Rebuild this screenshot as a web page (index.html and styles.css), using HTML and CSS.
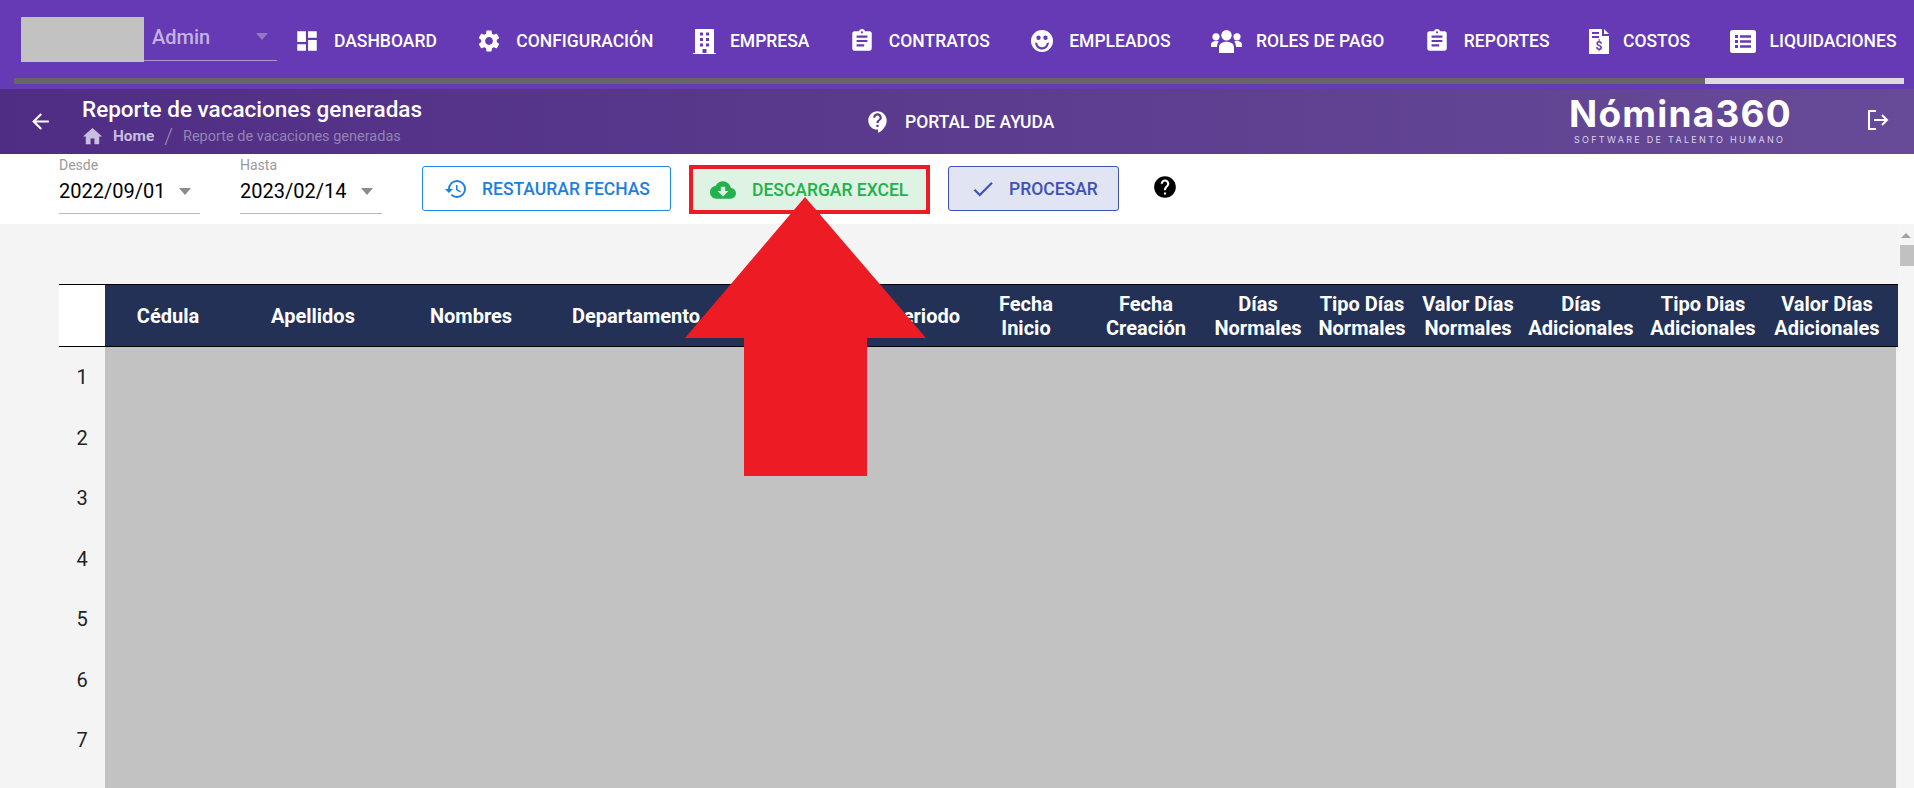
FILE: index.html
```html
<!DOCTYPE html>
<html lang="es">
<head>
<meta charset="utf-8">
<title>Reporte de vacaciones generadas</title>
<link rel="stylesheet" href="styles.css">
</head>
<body>
<header class="topbar">
  <div class="toprow">
    <div class="avatar"></div>
    <div class="profile"><span class="profile-name">Admin</span><span class="caret caret-profile"></span></div>
    <nav class="nav">
      <a class="nav-item"><span class="nav-icon"><svg class="i26" viewBox="0 0 24 24"><path d="M3 13h8V3H3v10zm0 8h8v-6H3v6zm10 0h8V11h-8v10zm0-18v6h8V3h-8z"/></svg></span>DASHBOARD</a>
      <a class="nav-item"><span class="nav-icon"><svg class="i26" viewBox="0 0 24 24"><path d="M19.14 12.94c.04-.3.06-.61.06-.94 0-.32-.02-.64-.07-.94l2.03-1.58a.49.49 0 0 0 .12-.61l-1.92-3.32a.488.488 0 0 0-.59-.22l-2.39.96c-.5-.38-1.03-.7-1.62-.94l-.36-2.54a.484.484 0 0 0-.48-.41h-3.84c-.24 0-.43.17-.47.41l-.36 2.54c-.59.24-1.13.57-1.62.94l-2.39-.96c-.22-.08-.47 0-.59.22L2.74 8.87c-.12.21-.08.47.12.61l2.03 1.58c-.05.3-.09.63-.09.94s.02.64.07.94l-2.03 1.58a.49.49 0 0 0-.12.61l1.92 3.32c.12.22.37.29.59.22l2.39-.96c.5.38 1.03.7 1.62.94l.36 2.54c.05.24.24.41.48.41h3.84c.24 0 .44-.17.47-.41l.36-2.54c.59-.24 1.13-.56 1.62-.94l2.39.96c.22.08.47 0 .59-.22l1.92-3.32c.12-.22.07-.47-.12-.61l-2.01-1.58zM12 15.6c-1.98 0-3.6-1.62-3.6-3.6s1.62-3.6 3.6-3.6 3.6 1.62 3.6 3.6-1.62 3.6-3.6 3.6z"/></svg></span>CONFIGURACIÓN</a>
      <a class="nav-item"><span class="nav-icon nav-icon-s"><svg class="icon-building" viewBox="0 0 23 25"><path fill-rule="evenodd" d="M2 0h19v24h2v1H0v-1h2zM7 3.500v3h3v-3zM13 3.500v3h3v-3zM7 9v3h3V9zM13 9v3h3V9zM7 14.500v3h3v-3zM13 14.500v3h3v-3zM9.500 20v4h4v-4z"/></svg></span>EMPRESA</a>
      <a class="nav-item"><span class="nav-icon"><svg class="i26" viewBox="0 0 24 24"><path d="M19 3h-4.180C14.400 1.840 13.300 1 12 1c-1.300 0-2.400.84-2.820 2H5c-1.100 0-2 .9-2 2v14c0 1.100.9 2 2 2h14c1.100 0 2-.9 2-2V5c0-1.100-.9-2-2-2zm-7 0c.55 0 1 .45 1 1s-.45 1-1 1-1-.45-1-1 .45-1 1-1zm2 14H7v-2h7v2zm3-4H7v-2h10v2zm0-4H7V7h10v2z"/></svg></span>CONTRATOS</a>
      <a class="nav-item"><span class="nav-icon"><svg class="icon-face" viewBox="0 0 22 22"><path fill-rule="evenodd" d="M11 0a11 11 0 1 1 0 22a11 11 0 0 1 0-22zM7.500 5.500a2.200 2.200 0 1 0 0 4.400a2.200 2.200 0 0 0 0-4.400zM14.500 5.500a2.200 2.200 0 1 0 0 4.400a2.200 2.200 0 0 0 0-4.400zM4 12.500C4.500 17 7.500 19.500 11 19.500S17.500 17 18 12.500L15.800 13C15.300 16 13.300 17.300 11 17.300S6.700 16 6.200 13z"/></svg></span>EMPLEADOS</a>
      <a class="nav-item"><span class="nav-icon nav-icon-l"><svg class="icon-users" viewBox="0 0 31 23"><circle cx="15.500" cy="5.200" r="5.200"/><circle cx="5" cy="6.800" r="3.600"/><circle cx="26" cy="6.800" r="3.600"/><path d="M8 23v-5.500c0-3.500 3-5.700 7.500-5.700s7.500 2.200 7.500 5.700V23zM0 17v-2.500c0-2.300 2-3.500 5-3.500 1 0 1.800.1 2.700.4C6.500 13 6 15 6 17zM31 17v-2.500c0-2.300-2-3.500-5-3.500-1 0-1.800.1-2.700.4C24.500 13 25 15 25 17z"/></svg></span>ROLES DE PAGO</a>
      <a class="nav-item"><span class="nav-icon"><svg class="i26" viewBox="0 0 24 24"><path d="M19 3h-4.180C14.400 1.840 13.300 1 12 1c-1.300 0-2.400.84-2.820 2H5c-1.100 0-2 .9-2 2v14c0 1.100.9 2 2 2h14c1.100 0 2-.9 2-2V5c0-1.100-.9-2-2-2zm-7 0c.55 0 1 .45 1 1s-.45 1-1 1-1-.45-1-1 .45-1 1-1zm2 14H7v-2h7v2zm3-4H7v-2h10v2zm0-4H7V7h10v2z"/></svg></span>REPORTES</a>
      <a class="nav-item"><span class="nav-icon nav-icon-xs"><svg class="icon-doc" viewBox="0 0 20 25"><path fill-rule="evenodd" d="M0 0h13v7h7v18H0zM15 0l5 5h-5zM3 3v2h7V3zM3 7v2h7V7z"/><text class="doc-sign" x="10" y="20.500" text-anchor="middle">$</text></svg></span>COSTOS</a>
      <a class="nav-item"><span class="nav-icon"><svg class="icon-list" viewBox="0 0 26 23"><path fill-rule="evenodd" d="M2.500 0h21A2.500 2.500 0 0 1 26 2.500v18a2.500 2.500 0 0 1-2.500 2.500h-21A2.500 2.500 0 0 1 0 20.500v-18A2.500 2.500 0 0 1 2.500 0zM5 5v3h3V5zM10 5.200v2.600h11V5.200zM5 10v3h3v-3zM10 10.200v2.600h11v-2.600zM5 15v3h3v-3zM10 15.200v2.600h11v-2.600z"/></svg></span>LIQUIDACIONES</a>
    </nav>
  </div>
  <div class="hscroll"><div class="hscroll-thumb"></div></div>
</header>

<section class="subbar">
  <span class="back"><svg class="i25" viewBox="0 0 24 24"><path d="M20 11H7.830l5.590-5.590L12 4l-8 8 8 8 1.410-1.410L7.830 13H20v-2z"/></svg></span>
  <div class="crumbs">
    <h1 class="page-title">Reporte de vacaciones generadas</h1>
    <div class="breadcrumb">
      <svg class="icon-home" viewBox="0 0 24 24"><path d="M10 20v-6h4v6h5v-8h3L12 3 2 12h3v8z"/></svg>
      <span class="crumb-home">Home</span>
      <span class="crumb-sep">/</span>
      <span class="crumb-current">Reporte de vacaciones generadas</span>
    </div>
  </div>
  <a class="portal"><svg class="i26" viewBox="0 0 24 24"><path d="M11.500 2C6.810 2 3 5.810 3 10.500S6.810 19 11.500 19h.5v3c4.860-2.340 8-7 8-11.500C20 5.810 16.190 2 11.500 2zm1 14.500h-2v-2h2v2zm0-3.500h-2c0-3.250 3-3 3-5 0-1.100-.9-2-2-2s-2 .9-2 2h-2c0-2.210 1.790-4 4-4s4 1.790 4 4c0 2.500-3 2.750-3 5z"/></svg><span class="portal-label">PORTAL DE AYUDA</span></a>
  <div class="brand">
    <div class="brand-name">Nómina360</div>
    <div class="brand-sub">SOFTWARE DE TALENTO HUMANO</div>
  </div>
  <svg class="icon-logout" viewBox="0 0 22 20"><path d="M9 1H2v18h7M7 10h13M15 5l5 5-5 5"/></svg>
</section>

<section class="toolbar">
  <div class="field">
    <span class="field-label">Desde</span>
    <div class="field-value"><span>2022/09/01</span><span class="caret"></span></div>
  </div>
  <div class="field field-second">
    <span class="field-label">Hasta</span>
    <div class="field-value"><span>2023/02/14</span><span class="caret"></span></div>
  </div>
  <button class="btn btn-restore"><svg class="i24" viewBox="0 0 24 24"><path d="M13 3a9 9 0 0 0-9 9H1l3.890 3.890.07.14L9 12H6c0-3.870 3.130-7 7-7s7 3.130 7 7-3.130 7-7 7c-1.930 0-3.680-.79-4.940-2.060l-1.420 1.420A8.954 8.954 0 0 0 13 21a9 9 0 0 0 0-18zm-1 5v5l4.280 2.540.72-1.210-3.500-2.080V8H12z"/></svg>RESTAURAR FECHAS</button>
  <button class="btn btn-excel"><svg class="i26" viewBox="0 0 24 24"><path d="M19.350 10.040A7.490 7.490 0 0 0 12 4C9.110 4 6.600 5.640 5.350 8.040A5.994 5.994 0 0 0 0 14c0 3.310 2.690 6 6 6h13c2.760 0 5-2.240 5-5 0-2.640-2.050-4.780-4.650-4.960zM17 13l-5 5-5-5h3V9h4v4h3z"/></svg>DESCARGAR EXCEL</button>
  <button class="btn btn-process"><svg class="i26" viewBox="0 0 24 24"><path d="M9 16.170L4.830 12l-1.420 1.410L9 19 21 7l-1.410-1.410z"/></svg>PROCESAR</button>
  <svg class="icon-help" viewBox="0 0 24 24"><path d="M12 2C6.480 2 2 6.480 2 12s4.480 10 10 10 10-4.480 10-10S17.520 2 12 2zm1 17h-2v-2h2v2zm2.070-7.750l-.9.92C13.450 12.900 13 13.500 13 15h-2v-.5c0-1.100.45-2.100 1.170-2.830l1.240-1.260c.37-.36.59-.86.59-1.410 0-1.100-.9-2-2-2s-2 .9-2 2H8c0-2.210 1.790-4 4-4s4 1.790 4 4c0 .88-.36 1.680-.93 2.250z"/></svg>
</section>

<main class="content">
  <div class="sheet">
    <div class="sheet-head">
      <div class="corner"></div>
      <div class="head-cols">
        <div class="th">Cédula</div>
        <div class="th">Apellidos</div>
        <div class="th">Nombres</div>
        <div class="th">Departamento</div>
        <div class="th"></div>
        <div class="th">Periodo</div>
        <div class="th">Fecha<br>Inicio</div>
        <div class="th">Fecha<br>Creación</div>
        <div class="th">Días<br>Normales</div>
        <div class="th">Tipo Días<br>Normales</div>
        <div class="th">Valor Días<br>Normales</div>
        <div class="th">Días<br>Adicionales</div>
        <div class="th">Tipo Dias<br>Adicionales</div>
        <div class="th">Valor Días<br>Adicionales</div>
      </div>
    </div>
    <div class="sheet-body">
      <ol class="row-numbers">
        <li>1</li><li>2</li><li>3</li><li>4</li><li>5</li><li>6</li><li>7</li>
      </ol>
      <div class="redacted"></div>
    </div>
  </div>
  <div class="vscroll"><span class="vscroll-arrow"></span><span class="vscroll-thumb"></span></div>
</main>

<svg class="callout" viewBox="0 0 241 279"><polygon points="120,0 241,141 182,141 182,279 59,279 59,141 0,141"/></svg>
</body>
</html>
```
FILE: styles.css
```css
* { box-sizing: border-box; }
html, body { margin: 0; height: 788px; overflow: hidden; }
body { position: relative; font-family: Roboto, "Liberation Sans", sans-serif; background: #f4f4f4; color: #000; }
svg { display: block; flex-shrink: 0; fill: currentColor; }
.i24 { width: 24px; height: 24px; }
.i25 { width: 25px; height: 25px; }
.i26 { width: 26px; height: 26px; }

.topbar { height: 89px; background: #663ab4; padding: 17px 0 0 0; overflow: hidden; }
.toprow { display: flex; align-items: flex-start; height: 61px; padding-left: 21px; }
.avatar { flex-shrink: 0; width: 123px; height: 45px; background: #c2c2c2; }
.profile { flex-shrink: 0; width: 133px; height: 44px; display: flex; align-items: center; justify-content: space-between; padding: 0 9px 4px 8px; border-bottom: 1px solid #a995d0; }
.profile-name { font-size: 20px; font-weight: 500; color: #c3b3e3; }
.caret { display: inline-block; width: 0; height: 0; border-left: 6px solid transparent; border-right: 6px solid transparent; border-top: 7px solid #8c8c8c; }
.caret-profile { border-top-color: #9478c6; }
.nav { flex-shrink: 0; display: flex; align-items: center; height: 48px; margin-left: 18px; }
.nav-item { display: flex; align-items: center; margin-right: 40.45px; color: #fff; font-size: 17.5px; font-weight: 500; white-space: nowrap; }
.nav-icon { display: flex; justify-content: center; width: 24px; margin-right: 15px; }
.nav-icon-s { width: 21px; }
.nav-icon-l { width: 30px; }
.nav-icon-xs { width: 18px; }
.icon-building { width: 23px; height: 25px; }
.icon-face { width: 22px; height: 22px; }
.icon-users { width: 31px; height: 23px; }
.icon-doc { width: 20px; height: 25px; }
.icon-list { width: 26px; height: 23px; }
.doc-sign { font-family: Roboto, sans-serif; font-size: 12px; font-weight: 700; fill: #663ab4; }
.hscroll { height: 6px; width: 1890px; margin-left: 14px; background: #dcdcdc; }
.hscroll-thumb { height: 6px; width: 1691px; background: #666; }

.subbar { height: 65px; display: flex; align-items: center; padding-left: 28px; background: linear-gradient(90deg, #4f2d84, #674a98); color: #fff; }
.back { width: 24px; margin-right: 30px; }
.crumbs { width: 783px; align-self: flex-start; padding-top: 8px; }
.page-title { margin: 0; font-size: 22.5px; line-height: 24px; font-weight: 500; color: #fff; white-space: nowrap; }
.breadcrumb { display: flex; align-items: center; height: 20px; margin-top: 5px; font-size: 14.5px; }
.icon-home { width: 23px; height: 23px; margin-left: -1px; color: #c9bde0; }
.crumb-home { margin-left: 9px; font-size: 15.4px; font-weight: 700; color: #c9bde0; }
.crumb-sep { margin: 0 10px; font-size: 22px; font-weight: 300; color: #9a8ab8; }
.crumb-current { color: #9383b4; white-space: nowrap; }
.portal { display: flex; align-items: center; width: 704px; font-size: 17.5px; font-weight: 500; }
.portal-label { margin-left: 14px; padding-top: 1px; }
.brand { width: 298px; align-self: flex-start; padding-top: 3px; }
.brand-name { width: 222px; font-family: Inter, sans-serif; font-size: 37px; line-height: 44px; font-weight: 700; letter-spacing: 1.2px; white-space: nowrap; }
.brand-sub { width: 222px; margin-top: -1px; padding-left: 5px; font-family: Inter, sans-serif; font-size: 9px; line-height: 10px; letter-spacing: 2.3px; color: #dcd4ea; white-space: nowrap; }
.icon-logout { width: 22px; height: 20px; margin-top: -4px; fill: none; stroke: #fff; stroke-width: 2; }

.toolbar { height: 70px; display: flex; align-items: flex-start; padding-left: 59px; background: #fff; }
.field { width: 141px; height: 60px; display: flex; flex-direction: column; border-bottom: 1px solid #b8b8b8; margin-right: 40px; }
.field-second { width: 142px; }
.field-label { margin-top: 3px; font-size: 14px; line-height: 16px; color: #9a9a9a; }
.field-value { display: flex; align-items: center; justify-content: space-between; height: 24px; margin-top: 6px; padding-right: 9px; font-size: 20px; color: #000; }
.btn { display: flex; align-items: center; height: 45px; margin-top: 12px; padding: 0; font-family: inherit; font-size: 17.5px; font-weight: 500; border: 1px solid; border-radius: 3px; background: #fff; white-space: nowrap; }
.btn-restore { width: 249px; padding-left: 21px; gap: 14px; color: #1e7fe0; border-color: #1e88e5; }
.btn-excel { width: 241px; height: 49px; margin: 11px 18px 0; padding-left: 17px; gap: 16px; color: #22b14c; background: #def3e4; border: 4px solid #ed1c24; border-radius: 0; }
.btn-process { width: 171px; padding-left: 21px; gap: 13px; margin-right: 33px; color: #3f51b5; background: #e1e4f3; border-color: #3f51b5; }
.icon-help { width: 26px; height: 26px; margin-top: 20px; }

.content { display: flex; padding: 60px 0 0 59px; height: 564px; }
.sheet { width: 1839px; }
.sheet-head { display: flex; height: 63px; border-top: 1px solid #000; border-bottom: 1px solid #000; }
.corner { width: 46px; background: #fff; }
.head-cols { flex: 1; display: grid; grid-template-columns: 126px 164px 152px 178px 159px 82px 120px 120px 104px 104px 108px 118px 126px 122px; background: #233157; color: #fff; font-size: 20px; font-weight: 700; line-height: 24px; text-align: center; }
.th { display: flex; align-items: center; justify-content: center; white-space: nowrap; }
.sheet-body { display: flex; height: 442px; margin-right: 2px; }
.row-numbers { width: 46px; margin: 0; padding: 0; list-style: none; }
.row-numbers li { height: 60.5px; display: flex; align-items: center; justify-content: center; font-size: 20px; color: #222; }
.redacted { flex: 1; background: #c2c2c2; }
.vscroll { width: 16px; display: flex; flex-direction: column; align-items: flex-end; margin-top: -60px; background: #f5f5f5; }
.vscroll-arrow { margin: 9px 3px 0 0; width: 0; height: 0; border-left: 5px solid transparent; border-right: 5px solid transparent; border-bottom: 5px solid #a3a3a3; }
.vscroll-thumb { width: 14px; height: 21px; margin-top: 7px; background: #c1c1c1; }

.callout { position: absolute; left: 685px; top: 197px; width: 241px; height: 279px; fill: #ed1c24; }
```
